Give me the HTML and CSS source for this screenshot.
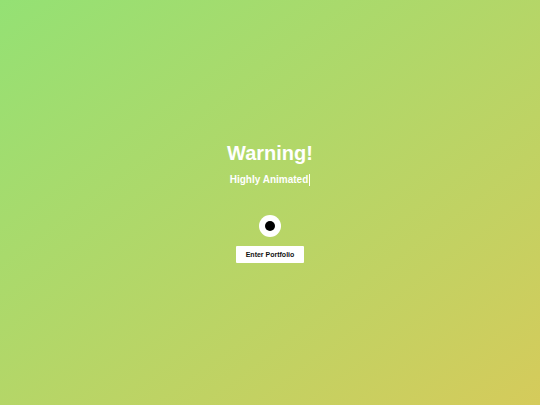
FILE: index.html
```html
<!DOCTYPE html>
<html>
<head>
<meta charset="utf-8">
<link rel="stylesheet" href="styles.css">
</head>
<body>
<main class="intro">
  <h1 class="title">Warning!</h1>
  <p class="subtitle">Highly Animated<span class="caret"></span></p>
  <div class="eye"><div class="pupil"></div></div>
  <button class="enter">Enter Portfolio</button>
</main>
</body>
</html>
```
FILE: styles.css
```css
html, body {
  margin: 0;
  padding: 0;
  height: 100%;
}
body {
  background: linear-gradient(to bottom right, #94e174, #d5cb5b);
  font-family: "Liberation Sans", Arial, sans-serif;
}
.intro {
  height: 100%;
  display: flex;
  flex-direction: column;
  align-items: center;
  justify-content: center;
}
.title {
  margin: 0;
  font-size: 20px;
  line-height: 23px;
  font-weight: bold;
  color: #fff;
}
.subtitle {
  margin: 9px 0 0;
  font-size: 10px;
  line-height: 12px;
  font-weight: bold;
  color: #fff;
  display: flex;
  align-items: center;
}
.caret {
  display: inline-block;
  width: 1px;
  height: 12px;
  background: #fff;
  margin-left: 1px;
}
.eye {
  margin-top: 29px;
  width: 22px;
  height: 22px;
  border-radius: 50%;
  background: #fff;
  display: flex;
  align-items: center;
  justify-content: center;
}
.pupil {
  width: 10px;
  height: 10px;
  border-radius: 50%;
  background: #000;
}
.enter {
  margin-top: 9px;
  border: none;
  background: #fff;
  color: #111;
  font-family: "Liberation Sans", Arial, sans-serif;
  font-size: 7px;
  font-weight: bold;
  line-height: 8px;
  padding: 5px 10px 4px;
  border-radius: 1px;
}
```
